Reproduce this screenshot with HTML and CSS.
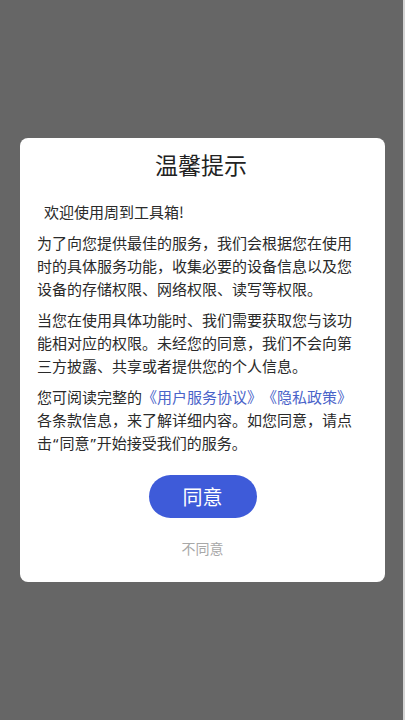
FILE: index.html
```html
<!DOCTYPE html>
<html lang="zh">
<head>
<meta charset="utf-8">
<link rel="stylesheet" href="styles.css">
</head>
<body>
<div class="overlay">
  <div class="dialog">
    <h1 class="title">温馨提示</h1>
    <p class="welcome">欢迎使用周到工具箱!</p>
    <p class="para">为了向您提供最佳的服务，我们会根据您在使用时的具体服务功能，收集必要的设备信息以及您设备的存储权限、网络权限、读写等权限。</p>
    <p class="para">当您在使用具体功能时、我们需要获取您与该功能相对应的权限。未经您的同意，我们不会向第三方披露、共享或者提供您的个人信息。</p>
    <p class="para">您可阅读完整的<span class="link">《用户服务协议》</span><span class="link">《隐私政策》</span>各条款信息，来了解详细内容。如您同意，请点击<span class="q">“</span>同意<span class="q">”</span>开始接受我们的服务。</p>
    <div class="actions">
      <button class="agree">同意</button>
      <button class="disagree">不同意</button>
    </div>
  </div>
</div>
</body>
</html>
```
FILE: styles.css
```css
html, body {
  margin: 0;
  padding: 0;
  height: 100%;
}
body {
  background: #d4d4d4;
  font-family: "Noto Sans CJK SC", "Noto Sans", sans-serif;
}
.overlay {
  width: 403px;
  height: 720px;
  background: #666666;
  display: flex;
  flex-direction: column;
  align-items: center;
  padding-top: 138px;
  box-sizing: border-box;
}
.dialog {
  width: 365px;
  margin-left: 2px;
  background: #ffffff;
  border-radius: 8px;
  padding: 11px 20px 24px 17px;
  box-sizing: border-box;
  color: #2a2a2a;
  text-spacing-trim: space-all;
}
.title {
  margin: 0;
  font-size: 23px;
  line-height: 30px;
  font-weight: 400;
  text-align: center;
  color: #222;
}
.welcome {
  margin: 21px 0 0;
  padding-left: 7px;
  font-size: 15px;
  line-height: 23px;
}
.para {
  margin: 8px 0 0;
  font-size: 15px;
  line-height: 23px;
}
.link {
  color: #4a63c9;
}
.q {
  font-family: "Noto Sans", sans-serif;
  padding: 0 1px;
}
.actions {
  display: flex;
  flex-direction: column;
  align-items: center;
  margin-top: 20px;
  margin-left: 3px;
}
.agree {
  width: 108px;
  height: 43px;
  border: none;
  border-radius: 22px;
  background: #3e5bd9;
  color: #fff;
  font-family: inherit;
  font-size: 20px;
  padding: 0;
}
.disagree {
  margin-top: 20px;
  border: none;
  background: none;
  color: #a8a8a8;
  font-family: inherit;
  font-size: 14px;
  line-height: 20px;
  padding: 0;
}
```
